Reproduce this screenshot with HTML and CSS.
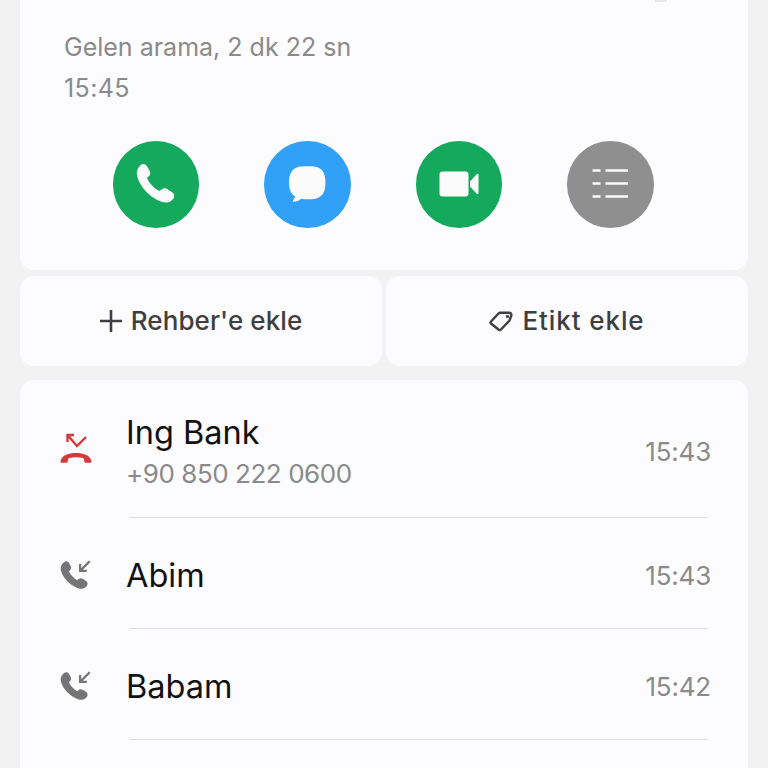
FILE: index.html
```html
<!DOCTYPE html>
<html>
<head>
  <title>Arama Detayi</title>
  <link rel="stylesheet" href="styles.css">
</head>
<body>
  <div class="top-card">
    <div class="cut-icon"></div>
    <p class="call-info">Gelen arama, 2 dk 22 sn</p>
    <p class="call-info call-time">15:45</p>
    <div class="actions">
      <button class="action green">
        <svg width="44" height="44" viewBox="3.5 2.7 34.6 34.6"><path d="M8.600 5.200c1.600-1.400 3.900-1 5 .7l2.200 3.600c.9 1.500.6 3.300-.6 4.400l-1.500 1.300c1.800 4.200 5.600 8.200 9.900 10.400l1.700-1.400c1.300-1 3-1.100 4.300-.2l3.900 2.500c1.700 1.100 2.200 3.300 1 5-1.200 1.800-3.200 3.200-5.400 3.100C18.800 34.100 6.300 21.500 5.700 11.500c-.1-2.400 1.200-4.700 2.900-6.300z" fill="#fbfbfb"/></svg>
      </button>
      <button class="action blue">
        <svg width="44" height="44" viewBox="4.500 3.200 34.600 34.600"><path d="M22.500 6.500c4.500 0 8 .3 10.500 2.600 2.600 2.400 3.300 6 3.300 10.400s-.7 7.800-3.300 10.200c-2.500 2.300-6 2.800-10.500 2.800-2 0-3.800-.1-5.400-.4-1.500 1.400-3.500 2.300-6 2.400-.5 0-.7-.5-.4-.9.900-1 1.500-2.200 1.700-3.400-.7-.4-1.300-.9-1.900-1.500-2.200-2.400-2.900-5.700-2.900-9.200s.7-7.900 3.300-10.300c2.500-2.300 6-2.700 10.500-2.700z" fill="#fbfbfb"/></svg>
      </button>
      <button class="action green">
        <svg width="44" height="44" viewBox="0 0 44 44"><path d="M2.500 12.500c0-1.900 1.200-3 3-3h23c1.800 0 3 1.100 3 3v19c0 1.900-1.200 3-3 3h-23c-1.800 0-3-1.100-3-3zM33 19.500l6.700-7.300c.7-.7 1.800-.3 1.800.7v18.200c0 1-1.100 1.400-1.800.7L33 24.500z" fill="#fbfbfb"/></svg>
      </button>
      <button class="action gray">
        <svg width="44" height="44" viewBox="0 0 44 44" fill="none" stroke="#fbfbfb" stroke-width="2.600"><path d="M4.500 8.500h8M17.500 8.500h22.500M4.500 21.500h8M17.500 21.500h22.500M4.500 34.500h8M17.500 34.500h22.500"/></svg>
      </button>
    </div>
  </div>

  <div class="button-row">
    <div class="text-button">
      <svg width="22" height="22" viewBox="0 0 22 22" fill="none" stroke="#3f3f3f" stroke-width="2.600"><path d="M11 0v22M0 11h22"/></svg>
      <span>Rehber'e ekle</span>
    </div>
    <div class="text-button tag-button">
      <svg width="24" height="22" viewBox="0 0 24 22" fill="none" stroke="#3f3f3f" stroke-width="2.400" stroke-linejoin="round"><path d="M2 11.500 9.500 3.500c.5-.5 1-.8 1.800-.8H20c1.700 0 2.700 1.300 2.300 2.800L20.500 10.500 12 19.500c-.7.8-1.800.8-2.500 0L2 13.500c-.6-.6-.6-1.400 0-2zM17 6.500h3"/></svg>
      <span>Etikt ekle</span>
    </div>
  </div>

  <div class="list-card">
    <div class="row row-first">
      <div class="row-icon missed-icon">
        <svg width="34" height="30" viewBox="0 0 34 30"><path d="M15 2H8.500v7M8.500 2l9.500 11L27 4" fill="none" stroke="#d43a3a" stroke-width="2.400"/><path d="M1.500 28C3 22 10 20 17 20s14 2 15.500 8c.2 1-.4 1.800-1.400 1.800h-4.200c-.9 0-1.500-.5-1.600-1.400l-.3-2c-.1-.7-.5-1.100-1.200-1.300-4.400-1.100-9.200-1.100-13.600 0-.7.200-1.100.6-1.200 1.300l-.3 2c-.1.900-.7 1.400-1.600 1.400H2.900c-1 0-1.600-.8-1.400-1.800z" fill="#d43a3a"/></svg>
      </div>
      <div class="row-text">
        <div class="row-name">Ing Bank</div>
        <div class="row-number">+90 850 222 0600</div>
      </div>
      <div class="row-time">15:43</div>
    </div>
    <div class="row">
      <div class="row-icon">
        <svg width="34" height="30" viewBox="0 0 30 26.500"><path d="M5.200 2.800c1.500-1.300 3.600-.9 4.500.7l1.500 2.700c.7 1.300.4 2.800-.6 3.700l-1 .9c1.400 3.200 4.200 6.200 7.400 7.900l1.100-1c1-.8 2.500-.9 3.600-.2l2.900 1.800c1.500 1 2 2.900.9 4.400-1 1.500-2.700 2.700-4.600 2.600C12.600 25.700 2.800 15.900 2.300 8.300 2.200 6.200 3.700 4.200 5.200 2.800z" fill="#757575"/><path d="M28 2l-8.500 8.500M19.500 4.500v6h6" fill="none" stroke="#757575" stroke-width="2"/></svg>
      </div>
      <div class="row-text"><div class="row-name">Abim</div></div>
      <div class="row-time">15:43</div>
    </div>
    <div class="row">
      <div class="row-icon">
        <svg width="34" height="30" viewBox="0 0 30 26.500"><path d="M5.200 2.800c1.500-1.300 3.600-.9 4.500.7l1.500 2.700c.7 1.300.4 2.800-.6 3.700l-1 .9c1.400 3.200 4.200 6.200 7.400 7.900l1.100-1c1-.8 2.500-.9 3.600-.2l2.900 1.800c1.500 1 2 2.900.9 4.400-1 1.500-2.700 2.700-4.600 2.600C12.600 25.700 2.800 15.900 2.300 8.300 2.200 6.200 3.700 4.200 5.200 2.800z" fill="#757575"/><path d="M28 2l-8.500 8.500M19.500 4.500v6h6" fill="none" stroke="#757575" stroke-width="2"/></svg>
      </div>
      <div class="row-text"><div class="row-name">Babam</div></div>
      <div class="row-time">15:42</div>
    </div>
  </div>
</body>
</html>
```

FILE: styles.css
```css
html {
  height: 100%;
}
body {
  font-family: Inter, 'Liberation Sans', sans-serif;
  background-color: #f2f2f2;
  margin: 0;
  padding: 0 20px;
  height: 768px;
  overflow: hidden;
  box-sizing: border-box;
}
.top-card {
  background-color: #fcfcfe;
  height: 270px;
  border-radius: 0 0 14px 14px;
  padding: 0 44px;
  box-sizing: border-box;
}
.cut-icon {
  width: 12px;
  height: 2px;
  margin-left: 591px;
  background-color: #e8e8e8;
}
.call-info {
  margin: 0;
  padding-top: 30px;
  font-size: 25px;
  line-height: 30px;
  color: #8a8a8a;
}
.call-time {
  padding-top: 11px;
  letter-spacing: 0.4px;
}
.actions {
  display: flex;
  gap: 65px;
  margin: 38px 0 0 48.7px;
}
.action {
  width: 86.5px;
  height: 86.5px;
  flex: none;
  padding: 0;
  border: none;
  border-radius: 50%;
  display: flex;
  align-items: center;
  justify-content: center;
}
.green {
  background-color: #14a95c;
}
.blue {
  background-color: #30a1f7;
}
.gray {
  background-color: #8f8f8f;
}
.button-row {
  display: flex;
  gap: 4px;
  margin-top: 6px;
}
.text-button {
  flex: 1;
  height: 90px;
  background-color: #fcfcfe;
  border-radius: 14px;
  display: flex;
  align-items: center;
  justify-content: center;
  gap: 9px;
  font-size: 26px;
  font-weight: 500;
  color: #3f3f3f;
}
.text-button span {
  letter-spacing: 0.1px;
  margin-top: -1px;
}
.tag-button span {
  letter-spacing: 0.9px;
}
.list-card {
  background-color: #fcfcfe;
  margin-top: 14px;
  height: 388px;
  border-radius: 14px 14px 0 0;
  padding-top: 27px;
  box-sizing: border-box;
}
.row {
  display: flex;
  align-items: center;
  height: 104px;
  padding-top: 6px;
  border-bottom: 1px solid #dedede;
  margin: 0 40px 0 110px;
}
.row-first {
  height: 90px;
  padding: 0 0 20px;
}
.row-icon {
  width: 34px;
  height: 30px;
  margin: -4px 34px 0 -72px;
  flex: none;
}
.missed-icon {
  margin: -8px 33px 0 -71px;
}
.row-text {
  flex: 1;
}
.row-name {
  font-size: 32.5px;
  line-height: 40px;
  color: #111;
}
.row-number {
  font-size: 26px;
  line-height: 34px;
  color: #8a8a8a;
  margin-top: 4px;
  letter-spacing: -0.45px;
}
.row-time {
  font-size: 26px;
  color: #8a8a8a;
  margin: -2px -3px 0 0;
  letter-spacing: -0.2px;
}
```
